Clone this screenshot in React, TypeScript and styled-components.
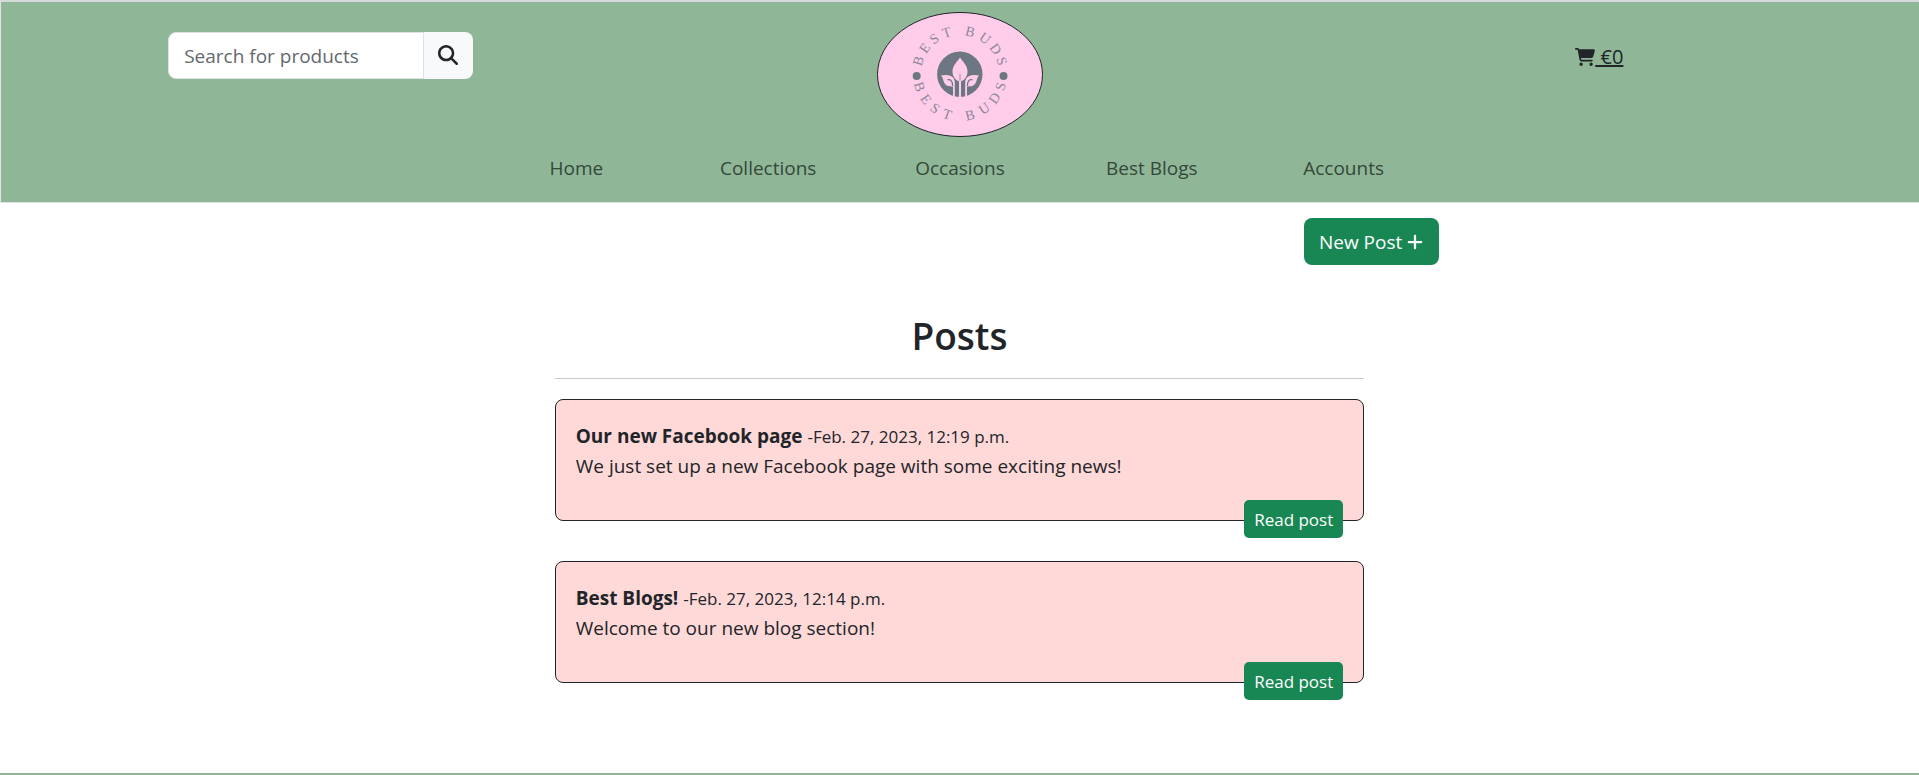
import React from 'react';
import styled, { createGlobalStyle } from 'styled-components';
import { FaCartShopping, FaMagnifyingGlass, FaPlus } from 'react-icons/fa6';

const GlobalStyle = createGlobalStyle`
  *, *::before, *::after { box-sizing: border-box; }
  body {
    margin: 0;
    background: #fff;
    color: #212529;
    font-family: "Open Sans", "Noto Sans", sans-serif;
    font-size: 19px;
    line-height: 30px;
  }
`;

const Header = styled.header`
  background: #8fb797;
  border: 1px solid #dee2e6;
  border-top: 2px solid #d5d9dc;
  border-right: 0;
  padding: 10px 0 19px;
`;

const TopRow = styled.div`
  display: grid;
  grid-template-columns: repeat(3, 1fr);
  justify-items: center;
  align-items: start;
`;

const SearchForm = styled.form`
  display: flex;
  height: 47px;
  margin-top: 20px;
`;

const SearchInput = styled.input`
  width: 256px;
  padding: 1px 15px 0;
  border: 1px solid #dee2e6;
  border-radius: 8px 0 0 8px;
  background: #fff;
  color: #212529;
  font: inherit;
  &::placeholder { color: #64686c; opacity: 1; }
`;

const SearchButton = styled.button`
  display: flex;
  align-items: center;
  justify-content: center;
  width: 49px;
  padding: 0 2px 2px 0;
  border: 0;
  border-radius: 0 8px 8px 0;
  background: #f8f9fa;
  color: #212529;
  font-size: 20px;
`;

const LogoLink = styled.a`
  display: block;
  height: 125px;
`;

const CartLink = styled.a`
  display: flex;
  margin-top: 30px;
  color: #212529;
  font-size: 20px;
  text-decoration: underline;
  text-decoration-thickness: 2px;
  white-space: pre;
  svg { margin-top: 5px; }
`;

const Nav = styled.nav`
  display: grid;
  grid-template-columns: repeat(5, 1fr);
  width: 50%;
  margin: 16px auto 0;
  text-align: center;
`;

const NavLink = styled.a`
  color: #36473b;
  text-decoration: none;
`;

const Actions = styled.div`
  display: flex;
  justify-content: flex-end;
  width: 50%;
  margin: 15px auto 0;
`;

const GreenButton = styled.button<{ $small?: boolean }>`
  display: inline-flex;
  align-items: center;
  justify-content: center;
  gap: 4px;
  height: ${(p) => (p.$small ? 38 : 47)}px;
  padding: 1px ${(p) => (p.$small ? 10 : 15)}px 0;
  border: 0;
  border-radius: ${(p) => (p.$small ? 5 : 8)}px;
  background: #198754;
  color: #fff;
  font-family: inherit;
  font-size: ${(p) => (p.$small ? 17 : 19)}px;
  svg { font-size: 18px; }
`;

const Posts = styled.section`
  width: 50%;
  margin: 47px auto 90px;
  padding: 0 75px;
`;

const Title = styled.h1`
  margin: 0;
  padding-bottom: 18px;
  border-bottom: 1px solid #c8c9ca;
  font-size: 37px;
  font-weight: 600;
  line-height: 48px;
  text-align: center;
`;

const PostCard = styled.article`
  position: relative;
  margin-top: 40px;
  padding: 21px 20px 39px;
  border: 1px solid #212529;
  border-radius: 8px;
  background: #ffd9d8;
  h1 + & { margin-top: 20px; }
  p { margin: 0; }
  time { font-size: 17px; line-height: 20px; }
`;

const ReadMore = styled.div`
  position: absolute;
  right: 20px;
  bottom: -18px;
  display: flex;
`;

const Footer = styled.footer`
  border-top: 2px solid #8fb797;
`;

type Glyph = { angle: number; half: number };

const glyphs: Glyph[] = [
  { angle: -72, half: 5 },
  { angle: -54, half: 4 },
  { angle: -36, half: 4 },
  { angle: -18, half: 4 },
  { angle: 0, half: 2 },
  { angle: 14, half: 5 },
  { angle: 35, half: 5 },
  { angle: 55, half: 5 },
  { angle: 73, half: 4 },
];

/* One rotated origin per character, so the name runs round the emblem. */
function ringText(radius: number, below: boolean) {
  const x: string[] = [];
  const y: string[] = [];
  const rotate: number[] = [];
  glyphs.forEach(({ angle, half }) => {
    const t = (angle * Math.PI) / 180;
    const turn = below ? -t : t;
    const side = below ? 1 : -1;
    x.push((83 + radius * Math.sin(t) - half * Math.cos(turn)).toFixed(2));
    y.push((62 + side * radius * Math.cos(t) - half * Math.sin(turn)).toFixed(2));
    rotate.push(below ? -angle : angle);
  });
  return { x: x.join(' '), y: y.join(' '), rotate: rotate.join(' ') };
}

function Logo() {
  return (
    <svg width="166" height="125" viewBox="0 0 166 125" role="img" aria-label="Best Buds">
      <ellipse cx="83" cy="62.5" rx="82.5" ry="62" fill="#ffcdea" stroke="#212529" />
      <g fill="#8b8798" fontFamily='"Liberation Serif", serif' fontSize="14">
        <text {...ringText(39, false)}>BEST BUDS</text>
        <text {...ringText(47, true)}>BEST BUDS</text>
      </g>
      <g fill="#6d7683">
        <circle cx="39.7" cy="64" r="4" />
        <circle cx="126.5" cy="64" r="4" />
        <circle cx="82.8" cy="62.3" r="22.7" />
      </g>
      <g fill="#ffcdea">
        <path d="M83 45.500C80 50 75.500 53.500 75.500 59.500C75.500 64.500 78.500 68 82 69.500V85.200H84V69.500C87.500 68 90.500 64.500 90.500 59.500C90.500 53.500 86 50 83 45.500Z" />
        <path d="M64 63.500C69 62.300 74 62.800 76.500 66C77.500 67.500 77.800 69 77.800 71V84.800H76V74.500C74 74.500 70 74.500 68 72C66 69.500 66.500 66 64 63.500Z" />
        <path d="M102 63.500C97 62.300 92 62.800 89.500 66C88.500 67.500 88.200 69 88.200 71V84.800H90V74.500C92 74.500 96 74.500 98 72C100 69.500 99.500 66 102 63.500Z" />
      </g>
      <g fill="none" stroke="#6d7683">
        <path d="M83 62V69" strokeWidth="0.7" />
        <path d="M70.500 67.700C74 67.200 75.700 69 75.500 74" strokeWidth="1.2" />
        <path d="M95.500 67.700C92 67.200 90.300 69 90.500 74" strokeWidth="1.2" />
      </g>
    </svg>
  );
}

const links = ['Home', 'Collections', 'Occasions', 'Best Blogs', 'Accounts'];

const posts = [
  {
    title: 'Our new Facebook page',
    date: 'Feb. 27, 2023, 12:19 p.m.',
    iso: '2023-02-27T12:19',
    text: 'We just set up a new Facebook page with some exciting news!',
  },
  {
    title: 'Best Blogs!',
    date: 'Feb. 27, 2023, 12:14 p.m.',
    iso: '2023-02-27T12:14',
    text: 'Welcome to our new blog section!',
  },
];

export default function App() {
  return (
    <>
      <GlobalStyle />
      <Header>
        <TopRow>
          <SearchForm role="search">
            <SearchInput type="text" placeholder="Search for products" aria-label="Search for products" />
            <SearchButton type="submit" aria-label="Search">
              <FaMagnifyingGlass />
            </SearchButton>
          </SearchForm>
          <LogoLink href="#home">
            <Logo />
          </LogoLink>
          <CartLink href="#cart">
            <FaCartShopping aria-hidden />
            <span> €0</span>
          </CartLink>
        </TopRow>
        <Nav>
          {links.map((label) => (
            <div key={label}>
              <NavLink href="#nav">{label}</NavLink>
            </div>
          ))}
        </Nav>
      </Header>
      <main>
        <Actions>
          <GreenButton type="button">
            New Post
            <FaPlus aria-hidden />
          </GreenButton>
        </Actions>
        <Posts>
          <Title>Posts</Title>
          {posts.map((post) => (
            <PostCard key={post.title}>
              <p>
                <strong>{post.title}</strong> <time dateTime={post.iso}>-{post.date}</time>
              </p>
              <p>{post.text}</p>
              <ReadMore>
                <GreenButton type="button" $small>
                  Read post
                </GreenButton>
              </ReadMore>
            </PostCard>
          ))}
        </Posts>
      </main>
      <Footer />
    </>
  );
}
